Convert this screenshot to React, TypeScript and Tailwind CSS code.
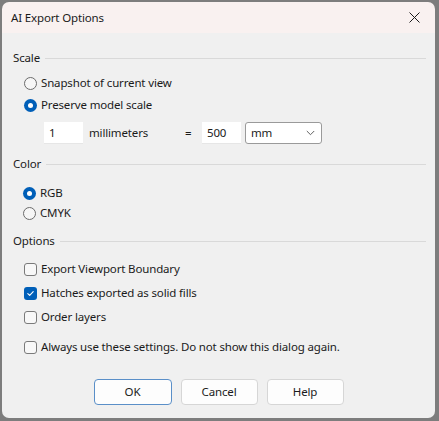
import React from "react";

const font = { fontFamily: '"Segoe UI", "Noto Sans", "Open Sans", sans-serif' };

function Radio({ checked }: { checked?: boolean }) {
  return checked ? (
    <span className="flex h-[13px] w-[13px] shrink-0 items-center justify-center rounded-full bg-[#005fb8]">
      <span className="h-[5px] w-[5px] rounded-full bg-white" />
    </span>
  ) : (
    <span className="h-[13px] w-[13px] shrink-0 rounded-full border border-[#6b6b6b] bg-[#f6f6f6]" />
  );
}

function Check({ checked }: { checked?: boolean }) {
  return checked ? (
    <span className="flex h-[13px] w-[13px] shrink-0 items-center justify-center rounded-[3px] bg-[#005fb8]">
      <svg width="9" height="9" viewBox="0 0 9 9" fill="none">
        <path d="M1.8 4.6 L3.7 6.4 L7.2 2.6" stroke="white" strokeWidth="1.1" strokeLinecap="round" strokeLinejoin="round" />
      </svg>
    </span>
  ) : (
    <span className="h-[13px] w-[13px] shrink-0 rounded-[3px] border border-[#7a7a7a] bg-[#f8f8f8]" />
  );
}

function Heading({ label, mt }: { label: string; mt: string }) {
  return (
    <div className={`flex h-[16px] items-center ${mt}`}>
      <span className="text-[#1b1b1b]">{label}</span>
      <span className="ml-[5px] h-px flex-1 bg-[#d9d9d9]" />
    </div>
  );
}

export default function App() {
  return (
    <div className="h-[421px] w-[439px] bg-[#7d7d7d] pl-[2px] pt-[2px]" style={font}>
      <div className="flex h-[416px] w-[433px] flex-col overflow-hidden rounded-[7px] text-[11.5px] tracking-[-0.15px] text-[#1b1b1b]">
        <div className="flex h-[31px] shrink-0 items-center bg-[#f9f1f0] pl-[9px] pr-[8px]">
          <span className="flex-1 pt-px text-[#1b1b1b]">AI Export Options</span>
          <svg width="11" height="11" viewBox="0 0 11 11" className="mr-[7px]">
            <path d="M0.5 0.5 L10.5 10.5 M10.5 0.5 L0.5 10.5" stroke="#1b1b1b" strokeWidth="1" />
          </svg>
        </div>
        <div className="flex flex-1 flex-col bg-[#f0f0f0] pl-[11px] pr-[9px]">
          <Heading label="Scale" mt="mt-[17px]" />
          <div className="ml-[11px] mt-[7px] flex h-[20px] items-center gap-[4px]">
            <Radio />
            <span>Snapshot of current view</span>
          </div>
          <div className="ml-[11px] mt-[2px] flex h-[20px] items-center gap-[4px]">
            <Radio checked />
            <span>Preserve model scale</span>
          </div>
          <div className="ml-[31px] mt-[7px] flex h-[22px] items-center">
            <div className="flex h-[22px] w-[39px] items-center border-b border-[#e6e6e6] bg-white pl-[5px]">1</div>
            <span className="ml-[6px] w-[96px]">millimeters</span>
            <span className="w-[17px]">=</span>
            <div className="flex h-[22px] w-[39px] items-center border-b border-[#e6e6e6] bg-white pl-[5px]">500</div>
            <div className="ml-[4px] flex h-[22px] w-[77px] items-center justify-between rounded-[3px] border border-[#9a9a9a] bg-white pl-[5px] pr-[6px]">
              <span>mm</span>
              <svg width="9" height="6" viewBox="0 0 9 6">
                <path d="M0.8 1 L4.5 4.7 L8.2 1" stroke="#606060" strokeWidth="1" fill="none" />
              </svg>
            </div>
          </div>
          <Heading label="Color" mt="mt-[12px]" />
          <div className="ml-[10px] mt-[11px] flex h-[20px] items-center gap-[4px]">
            <Radio checked />
            <span>RGB</span>
          </div>
          <div className="ml-[10px] flex h-[20px] items-center gap-[4px]">
            <Radio />
            <span>CMYK</span>
          </div>
          <Heading label="Options" mt="mt-[10px]" />
          <div className="ml-[11px] mt-[10px] flex h-[20px] items-center gap-[4px]">
            <Check />
            <span>Export Viewport Boundary</span>
          </div>
          <div className="ml-[11px] mt-[4px] flex h-[20px] items-center gap-[4px]">
            <Check checked />
            <span>Hatches exported as solid fills</span>
          </div>
          <div className="ml-[11px] mt-[4px] flex h-[20px] items-center gap-[4px]">
            <Check />
            <span>Order layers</span>
          </div>
          <div className="ml-[11px] mt-[10px] flex h-[20px] items-center gap-[4px]">
            <Check />
            <span>Always use these settings. Do not show this dialog again.</span>
          </div>
          <div className="-ml-[2px] mt-[22px] flex justify-center gap-[9px]">
            <button className="h-[26px] w-[78px] rounded-[4px] border border-[#5a8fc8] bg-[#fdfdfd] text-[#1b1b1b]">OK</button>
            <button className="h-[26px] w-[77px] rounded-[4px] border border-[#d6d6d6] bg-[#fdfdfd] text-[#1b1b1b]">Cancel</button>
            <button className="h-[26px] w-[77px] rounded-[4px] border border-[#d6d6d6] bg-[#fdfdfd] text-[#1b1b1b]">Help</button>
          </div>
        </div>
      </div>
    </div>
  );
}
